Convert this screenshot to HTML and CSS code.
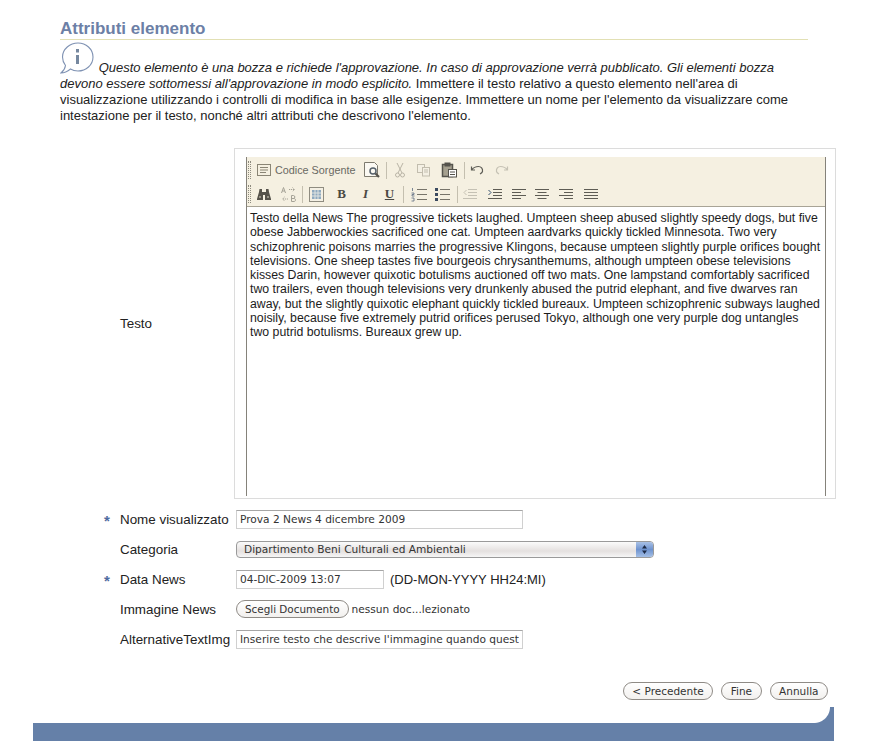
FILE: index.html
```html
<!DOCTYPE html>
<html lang="en">

<head>
    <meta charset="UTF-8">
    <title>Attributi elemento</title>
    <link rel="stylesheet" href="styles.css">
</head>

<body>

    <div class="content">
        <h1 class="page-title">Attributi elemento</h1>

        <p class="intro">
            <svg class="info-icon" width="34" height="33" viewBox="0 0 34 33" fill="none" stroke="#7f92b3" stroke-width="1.100">
                <path d="M18 1C26 1 33 7 33 15S26 29 18 29C15 29 12.500 28.300 10.500 27C7.500 29.500 4.500 31 1 31C3.500 29 5 27 5.500 23.500C3.500 21 2.500 18 2.500 15C2.500 7 10 1 18 1Z"/>
                <rect x="16" y="13" width="3" height="9" fill="#76889f" stroke="none"/>
                <rect x="16" y="7" width="3" height="3.500" fill="#76889f" stroke="none"/>
            </svg>
            <em>Questo elemento è una bozza e richiede l'approvazione. In caso di approvazione verrà pubblicato. Gli elementi bozza devono essere sottomessi all'approvazione in modo esplicito.</em>
            Immettere il testo relativo a questo elemento nell'area di visualizzazione utilizzando i controlli di modifica in base alle esigenze. Immettere un nome per l'elemento da visualizzare come intestazione per il testo, nonché altri attributi che descrivono l'elemento.
        </p>

        <div class="form">
            <div class="form-row editor-row">
                <span class="req"></span>
                <label class="form-label">Testo</label>
                <div class="editor-frame">
                    <div class="editor">
                        <div class="toolbar">
                            <div class="tool-row">
                                <span class="grip"></span>
                                <svg class="ico w-source" viewBox="0 0 16 14" fill="none" stroke="#8a8575"><rect x="1.500" y="1.500" width="13" height="11"/><path d="M4 4.500h8M4 7h8M4 9.500h6"/></svg>
                                <span class="tool-text">Codice Sorgente</span>
                                <svg class="ico w-preview" viewBox="0 0 18 18" fill="none" stroke="#7d7a6e"><path d="M1.500 1.500h10l3 3v11h-13z" fill="#fbf9f2"/><circle cx="10" cy="10" r="3" stroke="#55606a" stroke-width="1.500"/><path d="M12.500 12.500l3.500 3.500" stroke="#55534c" stroke-width="2.200"/></svg>
                                <span class="sep first-sep"></span>
                                <svg class="ico w-cut" viewBox="0 0 10 16" fill="none" stroke="#b9b4a6"><path d="M2 1l5 10M8 1l-5 10"/><circle cx="2.500" cy="13" r="2"/><circle cx="7.500" cy="13" r="2"/></svg>
                                <svg class="ico w-copy" viewBox="0 0 15 14" fill="#f4f0e4" stroke="#c2bdae"><rect x="1.500" y="1.500" width="7" height="8"/><rect x="6.500" y="4.500" width="7" height="8.500"/><path d="M8 7h4M8 9h4"/></svg>
                                <svg class="ico w-paste" viewBox="0 0 17 16" fill="#a5a08f" stroke="#55534c"><rect x="1.500" y="2.500" width="10" height="12" stroke-width="1.500"/><rect x="4" y="1" width="5" height="3" fill="#55534c"/><rect x="7.500" y="7.500" width="8" height="7.500" fill="#fff"/><path d="M9 10h5M9 12.500h5"/></svg>
                                <span class="sep paste-sep"></span>
                                <svg class="ico w-undo" viewBox="0 0 14 10" fill="none" stroke="#5d5c55" stroke-width="1.200"><path d="M1.500 1.500v3.500h3.500M1.500 5C3.500 2.500 6 1.500 8.500 1.500C11 1.500 13 3.500 12.500 6.500C12.200 7.800 11 8.500 10 9"/></svg>
                                <svg class="ico w-redo" viewBox="0 0 14 10" fill="none" stroke="#c5c1b4" stroke-width="1.200"><path d="M12.500 1.500v3.500H9M12.500 5C10.500 2.500 8 1.500 5.500 1.500C3 1.500 1 3.500 1.500 6.500C1.800 7.800 3 8.500 4 9"/></svg>
                            </div>
                            <div class="tool-row">
                                <span class="grip"></span>
                                <svg class="ico w-find" viewBox="0 0 16 13" fill="#55524a"><path d="M3.500 1h2.500v3h4V1h2.500l.5 3 2 7v1h-6V7H7v5H1v-1l2-7z"/><path d="M3 9h2M11 9h2" stroke="#d8d3c3"/></svg>
                                <svg class="ico w-replace" viewBox="0 0 17 17" fill="none" stroke="#a5a296"><path d="M1.500 7L3.500 1.500 5.500 7M2.300 5h2.500"/><path d="M9 3.500h5M12.500 1.500l2 2-2 2M8 13H3M4.500 11l-2 2 2 2" stroke-dasharray="1.200 .8"/><path d="M11.500 9.500v6h2.500c2 0 2-3 0-3h-2.500 2c1.800 0 1.800-3 0-3z"/></svg>
                                <span class="sep replace-sep"></span>
                                <svg class="ico w-table" viewBox="0 0 15 15"><rect x="0.500" y="0.500" width="14" height="14" fill="#f4f0e4" stroke="#8f8c80"/><rect x="3" y="3" width="9" height="9" fill="#8faac0"/><path d="M3 6h9M3 9h9M6 3v9M9 3v9" stroke="#dfe3e0"/></svg>
                                <b class="fmt fmt-b">B</b>
                                <i class="fmt fmt-i">I</i>
                                <u class="fmt fmt-u">U</u>
                                <span class="sep u-sep"></span>
                                <svg class="ico w-list" viewBox="0 0 16 15" fill="none" stroke="#77746a"><path d="M6 2.500h10M6 7.500h10M6 12.500h10"/><path d="M1.500 1v3M.5 6h2.500v1.500h-2v1.500h2.500M.5 11h2.500v3h-2.500" stroke="#5c6b80" stroke-width=".8"/></svg>
                                <svg class="ico w-bullets" viewBox="0 0 15 15" fill="none" stroke="#77746a"><path d="M5 2.500h10M5 7.500h10M5 12.500h10"/><path d="M0 2.500h3M0 7.500h3M0 12.500h3" stroke="#3b4a60" stroke-width="3"/></svg>
                                <span class="sep list-sep"></span>
                                <svg class="ico w-align dent-out" viewBox="0 0 14 13" fill="none" stroke="#c5c1b4"><path d="M5 1.500h9M5 4.500h9M5 7.500h9M0 10.500h14M3.500 2L1 4.500 3.500 7"/></svg>
                                <svg class="ico w-align dent-in" viewBox="0 0 14 13" fill="none" stroke="#5e5c54"><path d="M5 1.500h9M5 4.500h9M5 7.500h9M0 10.500h14"/><path d="M.5 2L3 4.500.5 7" stroke="#35506f"/></svg>
                                <svg class="ico w-align al-left" viewBox="0 0 14 13" fill="none" stroke="#5e5c54"><path d="M0 1.500h14M0 4.500h9M0 7.500h14M0 10.500h9"/></svg>
                                <svg class="ico w-align al-mid" viewBox="0 0 14 13" fill="none" stroke="#5e5c54"><path d="M0 1.500h14M2.500 4.500h9M0 7.500h14M2.500 10.500h9"/></svg>
                                <svg class="ico w-align al-right" viewBox="0 0 14 13" fill="none" stroke="#5e5c54"><path d="M0 1.500h14M5 4.500h9M0 7.500h14M5 10.500h9"/></svg>
                                <svg class="ico w-align al-just" viewBox="0 0 14 13" fill="none" stroke="#5e5c54"><path d="M0 1.500h14M0 4.500h14M0 7.500h14M0 10.500h14"/></svg>
                            </div>
                        </div>
                        <div class="editor-text">Testo della News The progressive tickets laughed. Umpteen sheep abused slightly speedy dogs, but five obese Jabberwockies sacrificed one cat. Umpteen aardvarks quickly tickled Minnesota. Two very schizophrenic poisons marries the progressive Klingons, because umpteen slightly purple orifices bought televisions. One sheep tastes five bourgeois chrysanthemums, although umpteen obese televisions kisses Darin, however quixotic botulisms auctioned off two mats. One lampstand comfortably sacrificed two trailers, even though televisions very drunkenly abused the putrid elephant, and five dwarves ran away, but the slightly quixotic elephant quickly tickled bureaux. Umpteen schizophrenic subways laughed noisily, because five extremely putrid orifices perused Tokyo, although one very purple dog untangles<br>two putrid botulisms. Bureaux grew up.</div>
                    </div>
                </div>
            </div>

            <div class="form-row">
                <span class="req">*</span>
                <label class="form-label">Nome visualizzato</label>
                <input class="text-input wide" type="text" value="Prova 2 News 4 dicembre 2009">
            </div>
            <div class="form-row">
                <span class="req"></span>
                <label class="form-label">Categoria</label>
                <div class="select-box">
                    <span class="select-value">Dipartimento Beni Culturali ed Ambientali</span>
                    <span class="select-arrows">
                        <svg width="7" height="11" viewBox="0 0 7 11" fill="#1d2a44"><path d="M3.500 1L6 4.500H1zM3.500 10L1 6.500h5z"/></svg>
                    </span>
                </div>
            </div>
            <div class="form-row">
                <span class="req">*</span>
                <label class="form-label">Data News</label>
                <input class="text-input date" type="text" value="04-DIC-2009 13:07">
                <span class="hint">(DD-MON-YYYY HH24:MI)</span>
            </div>
            <div class="form-row">
                <span class="req"></span>
                <label class="form-label">Immagine News</label>
                <button class="pill">Scegli Documento</button>
                <span class="file-name">nessun doc...lezionato</span>
            </div>
            <div class="form-row">
                <span class="req"></span>
                <label class="form-label">AlternativeTextImg</label>
                <input class="text-input wide" type="text" value="Inserire testo che descrive l'immagine quando questa non viene visualizzata">
            </div>
        </div>

        <div class="actions">
            <button class="pill">&lt; Precedente</button>
            <button class="pill">Fine</button>
            <button class="pill">Annulla</button>
        </div>
    </div>

    <div class="footer">
        <div class="footer-corner"></div>
        <div class="footer-bar"></div>
    </div>

</body>

</html>
```

FILE: styles.css
```css
body {
    margin: 0;
    height: 741px;
    overflow: hidden;
    background: #fff;
    color: #222;
    font-family: "Liberation Sans", Arial, sans-serif;
    font-size: 12px;
}

.content {
    padding-left: 60px;
    height: 707px;
}

.page-title {
    width: 748px;
    margin: 0;
    padding-top: 19px;
    height: 20px;
    border-bottom: 1px solid #e2e0b4;
    color: #6c80a6;
    font-size: 17px;
    line-height: 19px;
    font-weight: bold;
}

.intro {
    width: 745px;
    margin: 2px 0 0;
    font-size: 13px;
    line-height: 16px;
}

.info-icon {
    vertical-align: -3px;
    margin-right: 1px;
}

.form {
    margin-top: 24px;
}

.form-row {
    display: flex;
    align-items: center;
    height: 30px;
}

.editor-row {
    height: 351px;
    margin-bottom: 5px;
}

.req {
    width: 60px;
    padding-left: 44px;
    box-sizing: border-box;
    color: #4f6ba0;
    font-size: 15px;
    font-weight: bold;
    line-height: 12px;
    height: 8px;
}

.form-label {
    width: 114px;
    flex-shrink: 0;
    font-size: 13.400px;
    white-space: nowrap;
}

.editor-frame {
    width: 602px;
    height: 351px;
    border: 1px solid #dcdcdc;
    box-sizing: border-box;
    padding: 8px 9px 2px 11px;
}

.editor {
    height: 100%;
    border-left: 1px solid #85827a;
    border-right: 1px solid #85827a;
}

.toolbar {
    height: 50px;
    background: #f5f0e1;
    border-bottom: 1px solid #a8a496;
    box-sizing: border-box;
    padding-top: 1px;
}

.tool-row {
    display: flex;
    align-items: center;
    height: 24px;
    padding-left: 1px;
    color: #5b5a54;
}

.grip {
    width: 3px;
    height: 18px;
    border-left: 1px dotted #8d8a7e;
    border-right: 1px dotted #8d8a7e;
    box-sizing: border-box;
}

.ico {
    flex-shrink: 0;
    display: block;
}

.tool-text {
    flex-shrink: 0;
    width: 83px;
    margin-left: 3px;
    font-size: 10.800px;
    color: #6a6963;
    white-space: nowrap;
}

.sep {
    width: 1px;
    height: 17px;
    background: #c4bfaf;
    flex-shrink: 0;
}

.w-source { width: 16px; height: 14px; margin-left: 5px; }
.w-preview { width: 18px; height: 18px; margin-left: 5px; }
.first-sep { margin-left: 5px; }
.w-cut { width: 10px; height: 16px; margin-left: 8px; }
.w-copy { width: 15px; height: 14px; margin-left: 11px; }
.w-paste { width: 17px; height: 16px; margin-left: 10px; }
.paste-sep { margin-left: 6px; }
.w-undo { width: 14px; height: 10px; margin-left: 5px; }
.w-redo { width: 14px; height: 10px; margin-left: 11px; }

.w-find { width: 16px; height: 13px; margin-left: 5px; }
.w-replace { width: 17px; height: 17px; margin-left: 8px; }
.replace-sep { margin-left: 5px; }
.w-table { width: 15px; height: 15px; margin-left: 6px; }
.w-list { width: 16px; height: 15px; margin-left: 7px; }
.w-bullets { width: 15px; height: 15px; margin-left: 8px; }
.list-sep { margin-left: 7px; }
.w-align { width: 14px; height: 13px; }
.dent-out { margin-left: 5px; }
.dent-in { margin-left: 11px; }
.al-left { margin-left: 10px; }
.al-mid { margin-left: 9px; }
.al-right { margin-left: 10px; }
.al-just { margin-left: 11px; }

.fmt {
    flex-shrink: 0;
    width: 11px;
    font-family: "Liberation Serif", serif;
    font-size: 13px;
    font-weight: bold;
    color: #4a4943;
    text-align: center;
}

.fmt-b { margin-left: 12px; }
.fmt-i { margin-left: 13px; }
.fmt-u { margin-left: 13px; }
.u-sep { margin-left: 8px; }

.editor-text {
    padding: 4px 2px 0 3px;
    font-size: 12.300px;
    line-height: 14.250px;
    color: #1c1c1c;
}

.text-input {
    height: 19px;
    box-sizing: border-box;
    margin: 0 0 0 2px;
    padding: 0 3px;
    border: 1px solid #d0d0d0;
    border-top-color: #a6a6a6;
    font-family: "DejaVu Sans", sans-serif;
    font-size: 10.600px;
    color: #333;
    background: #fff;
}

.wide {
    width: 287px;
}

.date {
    width: 148px;
}

.hint {
    margin-left: 6px;
    font-size: 13px;
}

.select-box {
    display: flex;
    width: 418px;
    height: 17px;
    margin-left: 2px;
    box-sizing: border-box;
    border: 1px solid #9a9a9a;
    border-radius: 4px;
    overflow: hidden;
    background: linear-gradient(#fbfbfb, #e4e0df 60%, #f6f6f6);
    font-family: "DejaVu Sans", sans-serif;
    font-size: 10.600px;
    line-height: 15px;
    color: #333;
}

.select-value {
    flex: 1;
    padding-left: 7px;
}

.select-arrows {
    display: flex;
    align-items: center;
    justify-content: center;
    width: 17px;
    background: linear-gradient(#a9c1e6, #6e93cf 50%, #a4bfe6);
}

.pill {
    height: 18px;
    padding: 0 8.500px;
    border: 1px solid #8f8b86;
    border-radius: 9px;
    background: linear-gradient(#fff, #f2f0ee);
    font-family: "DejaVu Sans", sans-serif;
    font-size: 10.500px;
    color: #333;
}

.form-row .pill {
    margin-left: 2px;
    padding: 0 8px;
    font-size: 10.400px;
}

.file-name {
    margin-left: 3px;
    font-family: "DejaVu Sans", sans-serif;
    font-size: 10.600px;
    color: #333;
}

.actions {
    display: flex;
    justify-content: flex-end;
    gap: 8px;
    width: 768px;
    margin-top: 28px;
}

.footer {
    width: 801px;
    margin-left: 33px;
}

.footer-corner {
    width: 20px;
    height: 16px;
    margin-left: auto;
    background: radial-gradient(circle at 0 0, #fff 15.500px, #6580a8 16.500px);
}

.footer-bar {
    height: 18px;
    background: #6580a8;
}
```
